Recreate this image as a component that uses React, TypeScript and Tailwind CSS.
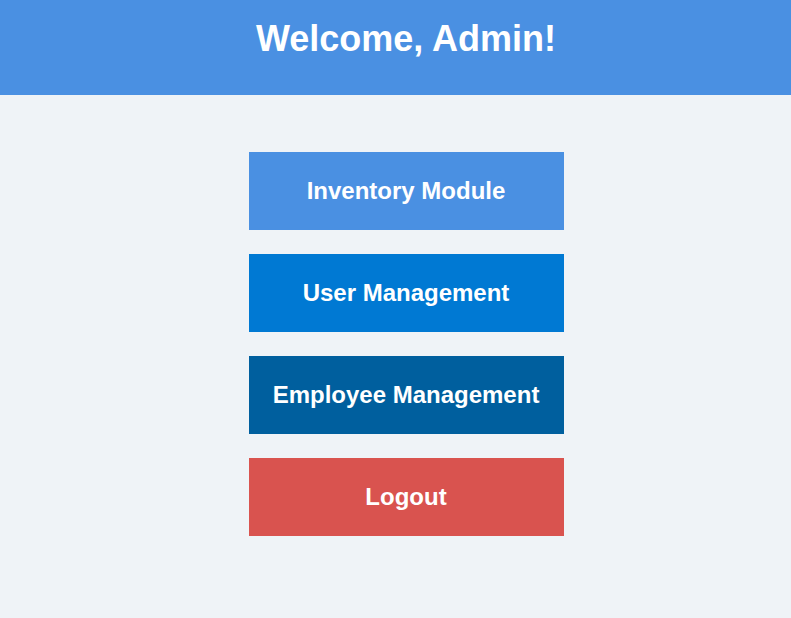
export default function App() {
  const buttons = [
    { label: "Inventory Module", cls: "bg-[#4a90e2]" },
    { label: "User Management", cls: "bg-[#0079d3]" },
    { label: "Employee Management", cls: "bg-[#005f9e]" },
    { label: "Logout", cls: "bg-[#d9534f]" },
  ];
  return (
    <div
      className="min-h-[618px] bg-[#eff3f7] text-white"
      style={{ fontFamily: '"Liberation Sans", Arial, sans-serif' }}
    >
      <header className="h-[95px] bg-[#4a90e2] pl-[21px] pt-[19px]">
        <h1 className="text-center text-[36px] font-bold leading-[40px]">Welcome, Admin!</h1>
      </header>
      <div className="flex flex-col items-center gap-[24px] pl-[21px] pt-[57px]">
        {buttons.map((b) => (
          <button
            key={b.label}
            className={`flex h-[78px] w-[315px] items-center justify-center pb-[1px] text-[24px] font-bold text-white ${b.cls}`}
          >
            {b.label}
          </button>
        ))}
      </div>
    </div>
  );
}
